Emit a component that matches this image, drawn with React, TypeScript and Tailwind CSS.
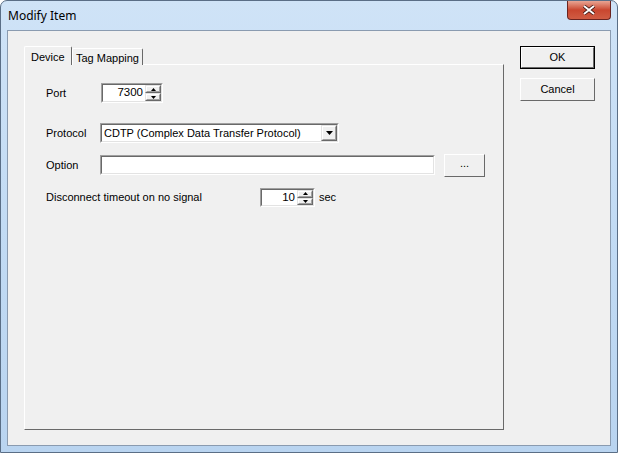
import React from "react";

const font = { fontFamily: "Tahoma, 'Liberation Sans', Arial, sans-serif" };

function Sunken({ className, children }: { className: string; children?: React.ReactNode }) {
  return (
    <div className={"border border-t-[#a0a0a0] border-l-[#a0a0a0] border-b-white border-r-white " + className}>
      <div className="h-full w-full border border-t-[#696969] border-l-[#696969] border-b-[#e3e3e3] border-r-[#e3e3e3] bg-white flex items-center">
        {children}
      </div>
    </div>
  );
}

function Raised({ className, children }: { className: string; children?: React.ReactNode }) {
  return (
    <div className={"border border-t-[#e3e3e3] border-l-[#e3e3e3] border-b-[#696969] border-r-[#696969] " + className}>
      <div className="h-full w-full border border-t-white border-l-white border-b-[#a0a0a0] border-r-[#a0a0a0] bg-[#f0f0f0] flex items-center justify-center">
        {children}
      </div>
    </div>
  );
}

function Arrow({ up }: { up?: boolean }) {
  return (
    <svg width="5" height="3" viewBox="0 0 5 3">
      <path d={up ? "M2.5 0L5 3H0Z" : "M0 0H5L2.5 3Z"} fill="#000" />
    </svg>
  );
}

function Spin({ value, w, h }: { value: string; w: string; h: string }) {
  return (
    <Sunken className={w + " " + h}>
      <span className="flex-1 text-right pr-[2px] text-[11.5px] text-black">{value}</span>
      <div className="flex flex-col h-full w-[16px]">
        <Raised className="h-1/2 w-full">
          <Arrow up />
        </Raised>
        <Raised className="h-1/2 w-full">
          <Arrow />
        </Raised>
      </div>
    </Sunken>
  );
}

export default function App() {
  return (
    <div
      className="w-[618px] h-[453px] rounded-t-[7px] border border-[#5a6e86] bg-gradient-to-b from-[#cfe3f7] via-[#c2dbf4] to-[#b9d4f0] flex flex-col overflow-hidden"
      style={font}
    >
      <div className="h-[29px] flex items-start justify-between shrink-0">
        <span className="pl-[7px] pt-[6px] text-[12px] text-black" style={{ fontFamily: "'Noto Sans', 'Liberation Sans', sans-serif" }}>
          Modify Item
        </span>
        <div className="mr-[6px] w-[44px] h-[19px] rounded-b-[4px] border border-t-0 border-[#6b2420] bg-gradient-to-b from-[#e8a493] via-[#c9462f] to-[#d05c43] flex items-center justify-center">
          <svg width="12" height="10" viewBox="0 0 12 10">
            <path d="M1 1L11 9M11 1L1 9" stroke="#3b1410" strokeWidth="3.5" />
            <path d="M1 1L11 9M11 1L1 9" stroke="#fff" strokeWidth="2" />
          </svg>
        </div>
      </div>
      <div className="flex-1 mx-[6px] mb-[6px] border border-[#8a9bb0] bg-[#f0f0f0] flex pl-[16px] pt-[15px] text-[11px] text-black">
        <div className="w-[480px] h-[384px] flex flex-col">
          <div className="flex items-end h-[19px] relative z-10">
            <div className="h-[19px] w-[48px] bg-[#f0f0f0] border border-b-0 border-t-white border-l-white border-r-[#696969] rounded-t-[2px] flex items-start pl-[6px] pt-[2px] whitespace-nowrap">
              Device
            </div>
            <div className="h-[17px] w-[71px] bg-[#f0f0f0] border border-b-0 border-t-white border-l-white border-r-[#696969] rounded-t-[2px] flex items-start pl-[3px] pt-[1px] whitespace-nowrap overflow-hidden">
              Tag Mapping
            </div>
          </div>
          <div className="flex-1 -mt-[1px] border border-t-white border-l-white border-r-[#696969] border-b-[#696969] bg-[#f0f0f0] flex flex-col pl-[21px] pt-[18px]">
            <div className="flex items-center h-[20px]">
              <span className="w-[55px]">Port</span>
              <Spin value="7300" w="w-[62px]" h="h-[20px]" />
            </div>
            <div className="flex items-center h-[20px] mt-[20px]">
              <span className="w-[54px]">Protocol</span>
              <Sunken className="w-[239px] h-[20px]">
                <span className="flex-1 pl-[2px] whitespace-nowrap">CDTP (Complex Data Transfer Protocol)</span>
                <Raised className="w-[16px] h-full">
                  <svg width="7" height="4" viewBox="0 0 7 4">
                    <path d="M0 0H7L3.5 4Z" fill="#000" />
                  </svg>
                </Raised>
              </Sunken>
            </div>
            <div className="flex items-center h-[22px] mt-[11px]">
              <span className="w-[54px]">Option</span>
              <Sunken className="w-[335px] h-[20px]" />
              <div className="ml-[9px] w-[41px] h-[23px] border border-t-white border-l-white border-b-[#696969] border-r-[#696969] flex items-center justify-center pb-[4px]">
                ...
              </div>
            </div>
            <div className="flex items-center h-[19px] mt-[12px]">
              <span className="w-[214px] whitespace-nowrap">Disconnect timeout on no signal</span>
              <Spin value="10" w="w-[55px]" h="h-[19px]" />
              <span className="ml-[4px]">sec</span>
            </div>
          </div>
        </div>
        <div className="ml-[16px] flex flex-col pt-[0px]">
          <div className="w-[75px] h-[23px] border border-black">
            <div className="h-full w-full border border-t-white border-l-white border-b-[#696969] border-r-[#696969] flex items-center justify-center">
              OK
            </div>
          </div>
          <div className="mt-[9px] w-[75px] h-[23px] border border-t-white border-l-white border-b-[#696969] border-r-[#696969] flex items-center justify-center">
            Cancel
          </div>
        </div>
      </div>
    </div>
  );
}
